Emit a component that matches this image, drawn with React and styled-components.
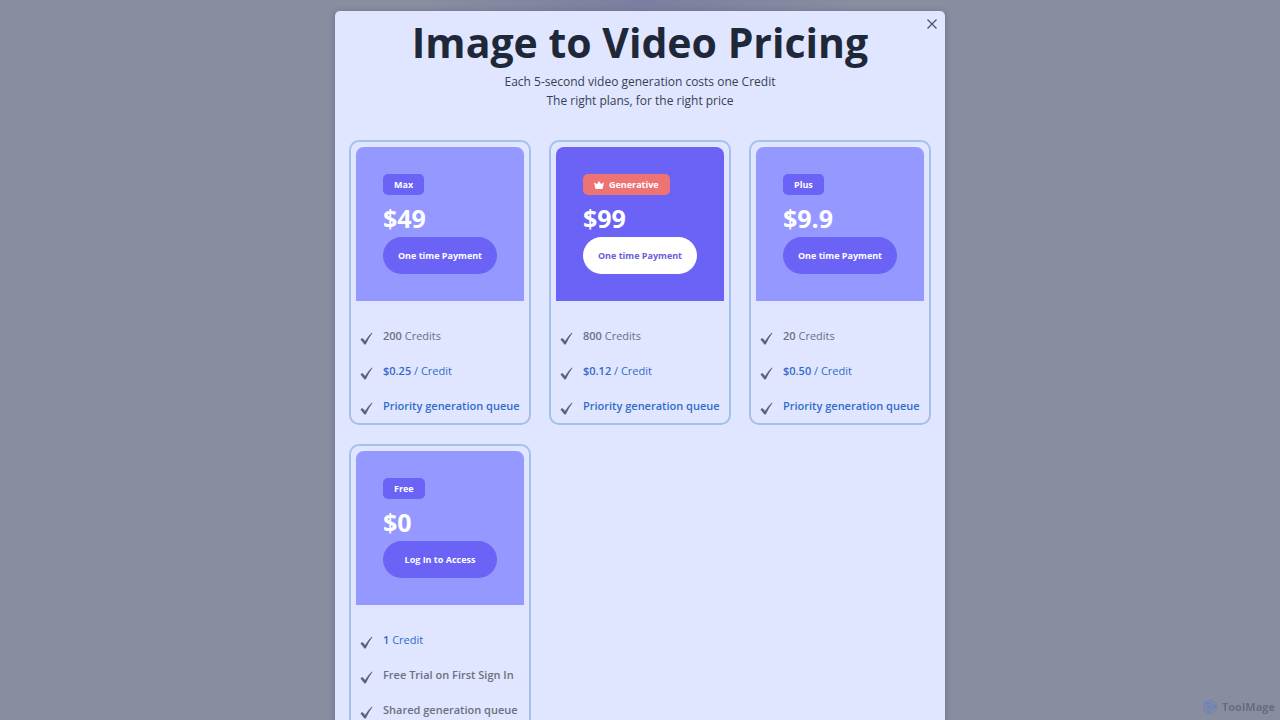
import styled, { createGlobalStyle } from "styled-components";

const plans = [
  {
    name: "Max",
    price: "$49",
    action: "One time Payment",
    features: [
      { strong: "200", text: " Credits" },
      { strong: "$0.25", text: " / Credit", blue: true },
      { strong: "Priority generation queue", blue: true },
    ],
  },
  {
    name: "Generative",
    price: "$99",
    action: "One time Payment",
    featured: true,
    features: [
      { strong: "800", text: " Credits" },
      { strong: "$0.12", text: " / Credit", blue: true },
      { strong: "Priority generation queue", blue: true },
    ],
  },
  {
    name: "Plus",
    price: "$9.9",
    action: "One time Payment",
    features: [
      { strong: "20", text: " Credits" },
      { strong: "$0.50", text: " / Credit", blue: true },
      { strong: "Priority generation queue", blue: true },
    ],
  },
  {
    name: "Free",
    price: "$0",
    action: "Log In to Access",
    features: [
      { strong: "1", text: " Credit", blue: true },
      { strong: "Free Trial on First Sign In" },
      { strong: "Shared generation queue" },
    ],
  },
];

const PlanCard = ({ plan }) => {
  return (
    <Card>
      <CardHead $featured={plan.featured}>
        <Badge $featured={plan.featured}>
          {plan.featured && (
            <CrownIcon viewBox="0 0 20 16" aria-hidden="true">
              <path d="M0 3 L6 6 L10 0 L14 6 L20 3 L17 16 H3 Z" />
            </CrownIcon>
          )}
          {plan.name}
        </Badge>
        <Price>{plan.price}</Price>
        <PayButton type="button" $featured={plan.featured}>
          {plan.action}
        </PayButton>
      </CardHead>
      <Features>
        {plan.features.map((item) => (
          <Feature key={item.strong} $blue={item.blue}>
            <CheckIcon viewBox="0 0 26 26" aria-hidden="true">
              <path d="M1 15 Q4 11 6 13 L10 18 Q16 8 24 1 L25 2 Q18 11 12 24 Q10 26 8 24 Z" />
            </CheckIcon>
            <span>
              <b>{item.strong}</b>
              {item.text}
            </span>
          </Feature>
        ))}
      </Features>
    </Card>
  );
};

const App = () => {
  return (
    <>
      <GlobalStyle />
      <Overlay>
        <Modal role="dialog" aria-labelledby="pricing-title">
          <CloseButton type="button" aria-label="Close">
            <svg viewBox="0 0 10 10" width="10" height="10">
              <path d="M0.5 0.5 L9.5 9.5 M9.5 0.5 L0.5 9.5" />
            </svg>
          </CloseButton>
          <Title id="pricing-title">Image to Video Pricing</Title>
          <Intro>
            Each 5-second video generation costs one Credit
            <br />
            The right plans, for the right price
          </Intro>
          <PlanGrid>
            {plans.map((plan) => (
              <PlanCard key={plan.name} plan={plan} />
            ))}
          </PlanGrid>
        </Modal>
        <Watermark>
          <svg viewBox="0 0 16 16" width="16" height="16" aria-hidden="true">
            <path d="M8 1 L14 4.5 V11.5 L8 15 L2 11.5 V4.5 Z" />
            <path d="M8 4 L11.5 6 V10 L8 12 L4.5 10 V6 Z M2 4.5 L8 4 M14 4.5 L11.5 10 M8 15 L4.5 10" />
            <circle cx="8" cy="8" r="1.5" />
          </svg>
          ToolMage
        </Watermark>
      </Overlay>
    </>
  );
};

export default App;

const GlobalStyle = createGlobalStyle`
  * {
    box-sizing: border-box;
  }
  body {
    margin: 0;
    overflow: hidden;
    font-family: "Open Sans", "Noto Sans", sans-serif;
    background: #888da0;
  }
`;

const Overlay = styled.div`
  display: flex;
  justify-content: center;
  align-items: flex-start;
  height: 100vh;
  padding-top: 11px;
  overflow: hidden;
  background:
    radial-gradient(ellipse 210px 70px at 50% 0, #7c7ea0, transparent),
    #888da0;
`;

const Modal = styled.section`
  position: relative;
  width: 100%;
  max-width: 610px;
  padding: 0 14px 14px;
  border-radius: 5px;
  background: #e0e6ff;
  box-shadow: 0 1px 6px rgba(40, 45, 75, 0.3);
`;

const CloseButton = styled.button`
  position: absolute;
  top: 5px;
  right: 5px;
  display: flex;
  align-items: center;
  justify-content: center;
  width: 16px;
  height: 16px;
  padding: 0;
  border: none;
  background: none;
  cursor: pointer;
  & svg {
    fill: none;
    stroke: #4b5062;
    stroke-width: 1.2;
  }
`;

const Title = styled.h1`
  margin: 0;
  padding-top: 3px;
  color: #1f2838;
  font-size: 41px;
  font-weight: 700;
  line-height: 56px;
  text-align: center;
`;

const Intro = styled.p`
  margin: 0;
  padding-top: 2px;
  color: #374151;
  font-size: 12px;
  line-height: 19px;
  text-align: center;
`;

const PlanGrid = styled.div`
  display: grid;
  grid-template-columns: repeat(auto-fill, minmax(180px, 1fr));
  gap: 19px 18px;
  margin-top: 30px;
`;

const Card = styled.article`
  padding: 5px;
  border: 2px solid #a3c1ec;
  border-radius: 10px;
`;

const CardHead = styled.div`
  display: flex;
  flex-direction: column;
  align-items: flex-start;
  padding: 27px;
  border-radius: 8px 8px 0 0;
  background: ${(props) => (props.$featured ? "#6a63f6" : "#9498ff")};
`;

const Badge = styled.span`
  display: flex;
  align-items: center;
  gap: 5px;
  height: 21px;
  padding: 0 11px;
  border-radius: 5px;
  color: #fff;
  font-size: 9px;
  font-weight: 700;
  background: ${(props) => (props.$featured ? "#ee7373" : "#6a63f6")};
`;

const CrownIcon = styled.svg`
  width: 10px;
  height: 8px;
  fill: #fff;
`;

const Price = styled.strong`
  color: #fff;
  font-size: 25px;
  font-weight: 700;
  line-height: 42px;
  padding-top: 2px;
  height: 42px;
`;

const PayButton = styled.button`
  width: 100%;
  height: 37px;
  padding: 0;
  border: none;
  border-radius: 19px;
  color: ${(props) => (props.$featured ? "#6a5bdc" : "#fff")};
  font-family: inherit;
  font-size: 9px;
  font-weight: 700;
  white-space: nowrap;
  background: ${(props) => (props.$featured ? "#fff" : "#6a63f6")};
  cursor: pointer;
`;

const Features = styled.ul`
  display: flex;
  flex-direction: column;
  gap: 17px;
  margin: 0;
  padding: 26px 0 3px 4px;
  list-style: none;
`;

const Feature = styled.li`
  display: flex;
  align-items: center;
  gap: 10px;
  color: ${(props) => (props.$blue ? "#326bc8" : "#6b7080")};
  font-size: 11px;
  line-height: 18px;
  white-space: nowrap;
  & b {
    font-weight: 600;
  }
`;

const CheckIcon = styled.svg`
  flex: none;
  width: 13px;
  height: 18px;
  padding-top: 5px;
  fill: #5f6475;
`;

const Watermark = styled.div`
  position: fixed;
  right: 5px;
  bottom: 4px;
  display: flex;
  align-items: center;
  gap: 4px;
  color: #686d7d;
  font-size: 11px;
  font-weight: 700;
  line-height: 18px;
  & svg {
    fill: none;
    stroke: #667fbd;
  }
`;
